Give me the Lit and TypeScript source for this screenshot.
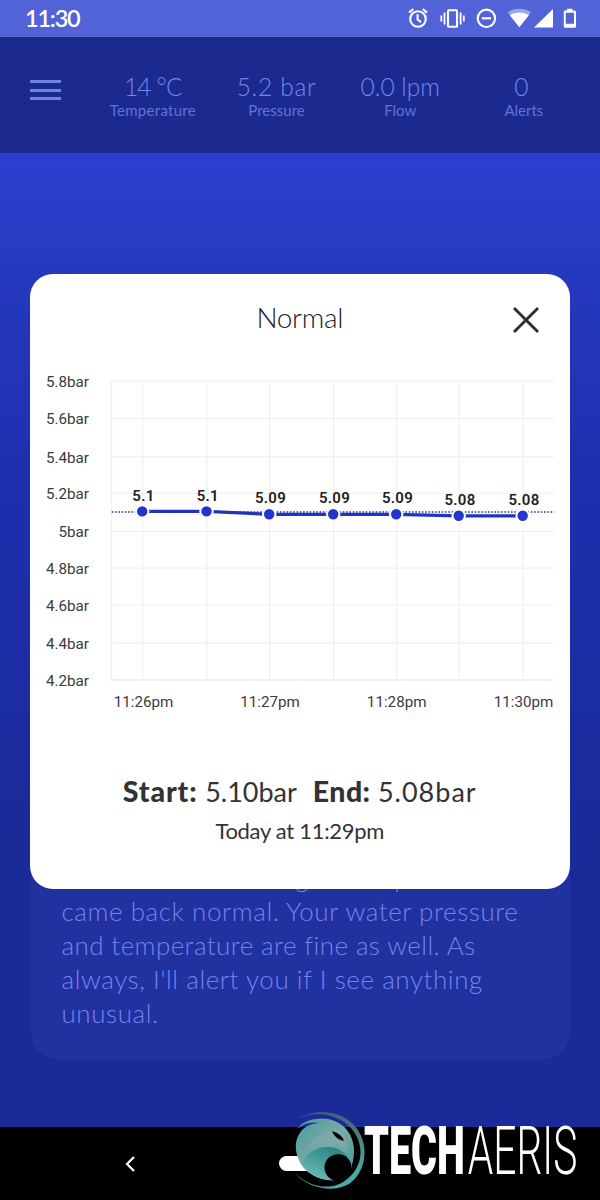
import { LitElement, html, svg, css } from "lit";
import { customElement } from "lit/decorators.js";

const TICKS: [string, number][] = [
  ["5.8bar", 381.3], ["5.6bar", 418.5], ["5.4bar", 456.8], ["5.2bar", 493.3], ["5bar", 531.5],
  ["4.8bar", 568.2], ["4.6bar", 605], ["4.4bar", 643.2], ["4.2bar", 680],
];

const POINTS = [
  { x: 142, y: 511.4, label: "5.1" },
  { x: 206.3, y: 511.4, label: "5.1" },
  { x: 269, y: 514.3, label: "5.09" },
  { x: 333, y: 514.3, label: "5.09" },
  { x: 396, y: 514.3, label: "5.09" },
  { x: 458.5, y: 515.8, label: "5.08" },
  { x: 522.5, y: 515.8, label: "5.08" },
];

const TIMES: [string, number][] = [["11:26pm", 143.3], ["11:27pm", 269.8], ["11:28pm", 396.5], ["11:30pm", 523.3]];

@customElement("pressure-chart")
export class PressureChart extends LitElement {
  static styles = css`
    :host { display: block; }
    svg { display: block; }
    text { font-family: Roboto, sans-serif; font-size: 15.2px; fill: #3c3c3c; }
    .tick { text-anchor: end; }
    .mid { text-anchor: middle; }
    .value { font-size: 15px; text-anchor: middle; font-weight: 600; fill: #222; letter-spacing: 0.3px; }
    .grid { stroke: #f0f0f1; stroke-width: 1.2; }
    .axis { stroke: #e2e2e4; stroke-width: 1.2; }
    .mean { stroke: #26389c; stroke-width: 1.6; stroke-dasharray: 1.6 1.7; }
    .series { stroke: #2234bd; stroke-width: 3.2; fill: none; }
    .dot { fill: #2335cb; stroke: #fff; stroke-width: 2; }
  `;

  render() {
    return html`<svg width="539" height="360" viewBox="29.800 360 539 360">
      ${TICKS.map(([t, y], i) => svg`
        <line class=${i === 8 ? "axis" : "grid"} x1="111" x2="554" y1=${y} y2=${y}></line>
        <text class="tick" x="88.8" y=${y + 5.8}>${t}</text>`)}
      <line class="grid" x1="111.5" x2="111.5" y1="381" y2="680"></line>
      ${POINTS.map((p) => svg`<line class="grid" x1=${p.x + 0.5} x2=${p.x + 0.5} y1="383" y2="679"></line>`)}
      <polyline class="series" points=${POINTS.map((p) => `${p.x},${p.y}`).join(" ")}></polyline>
      <line class="mean" x1="111.5" x2="554" y1="512" y2="512"></line>
      ${POINTS.map((p) => svg`
        <circle class="dot" cx=${p.x} cy=${p.y} r="6.2"></circle>
        <text class="value" x=${p.x + 1.3} y=${p.y - 10.9}>${p.label}</text>`)}
      ${TIMES.map(([t, x]) => svg`<text class="mid" x=${x} y="706.5">${t}</text>`)}
    </svg>`;
  }
}

@customElement("status-icons")
export class StatusIcons extends LitElement {
  static styles = css`
    :host { display: block; }
    svg { display: block; }
  `;

  render() {
    return html`<svg width="180" height="36" viewBox="400 0 180 36" fill="none" stroke="#fff" stroke-width="2.1">
      <circle cx="418" cy="19" r="7.8"></circle>
      <path d="M417.6 14.3v5.2l3.4 2.6M409 12.6l4.3-3.6M427 12.6L422.700 9"></path>
      <rect x="448" y="10.300" width="9" height="16.400" rx="0.8"></rect>
      <path d="M444.500 12.500v12M441.300 15.500v6M460.600 12.500v12M463.800 15.500v6" stroke-width="1.8"></path>
      <circle cx="486.400" cy="18.300" r="8.700"></circle>
      <path d="M481.800 18.300h9.300"></path>
      <g stroke="none">
        <path fill="#9ba4ea" d="M507.600 12.300C514 7.400 524.800 7.400 531 12.300L519.300 27z"></path>
        <path fill="#fff" d="M509.800 15.300C515 11.600 523.700 11.600 528.800 15.300L519.300 27.200z"></path>
        <path fill="#fff" d="M534 27.600L553 9v18.600z"></path>
        <path fill="#fff" fill-rule="evenodd" d="M567 8.800h5.500v1.700h2.200q1.300 0 1.300 1.300v14.500q0 1.500-1.500 1.500h-9.300q-1.400 0-1.400-1.500V11.800q0-1.300 1.300-1.300h1.900zM565.700 12.700v11.100h8.300V12.700z"></path>
      </g>
    </svg>`;
  }
}

@customElement("brand-mark")
export class BrandMark extends LitElement {
  static styles = css`
    :host { display: block; }
    svg { display: block; }
    text { font-family: Roboto, sans-serif; font-size: 66px; fill: #fff; }
    .heavy { font-weight: 900; }
    .thin { font-weight: 300; }
  `;

  render() {
    return html`<svg width="320" height="95" viewBox="280 1105 320 95">
      <defs>
        <linearGradient id="ball" x1="0" y1="0" x2="1" y2="1">
          <stop offset="0" stop-color="#489c9c"></stop>
          <stop offset="0.5" stop-color="#79aaa9"></stop>
          <stop offset="1" stop-color="#3f9a96"></stop>
        </linearGradient>
        <linearGradient id="inner" x1="0.8" y1="0" x2="0.2" y2="1">
          <stop offset="0" stop-color="#207f80"></stop>
          <stop offset="1" stop-color="#70beb8"></stop>
        </linearGradient>
        <linearGradient id="ring" x1="0" y1="0" x2="0.4" y2="1">
          <stop offset="0" stop-color="#38518a"></stop>
          <stop offset="0.5" stop-color="#477777"></stop>
          <stop offset="1" stop-color="#4ba8a3"></stop>
        </linearGradient>
      </defs>
      <path fill="url(#ring)" d="M298.500 1118.500C313 1109 338 1109 353 1124C370 1141 368 1171 349 1184C332 1194 306 1187 295 1173C310 1188 332 1191 346 1180C363 1168 366 1144 350 1127C336 1113 314 1111 298.500 1118.500z"></path>
      <path fill="url(#ball)" d="M297 1129C304 1119 323 1115 337 1122C353 1130 358 1149 351 1168L340 1179C322 1184 303 1172 299 1160C293 1147 296 1136 303 1129Q310 1123 319 1123Q307 1121 297 1129z"></path>
      <path fill="#8aaaaa" d="M305 1151Q318 1140 334 1142L347 1152Q349 1140 340 1131Q329 1128 315 1139z" opacity=".5"></path>
      <path fill="url(#inner)" d="M302 1164C306 1153 316 1147 328 1147C339 1147 349 1154 352 1167L337 1180C321 1182 307 1174 302 1164z"></path>
      <path fill="#000" d="M332 1131Q342 1134 344 1141Q335 1139 332 1131z"></path>
      <circle cx="337.800" cy="1167.500" r="13.300" fill="#000"></circle>
      <path fill="#000" d="M338 1154.200A13.500 13.500 0 0 1 351.500 1167L346 1178L338 1181z"></path>
      <text class="heavy" transform="translate(364 1173.800) scale(.6 1)">TECH</text>
      <text class="thin" transform="translate(467.800 1173.800) scale(.617 1)">AERIS</text>
    </svg>`;
  }
}

@customElement("app-root")
export class AppRoot extends LitElement {
  static styles = css`
    :host { display: block; font-family: Lato, sans-serif; }
    .screen { position: relative; display: flex; flex-direction: column; width: 600px; height: 1200px; overflow: hidden; background: #000; }
    .status { display: flex; justify-content: space-between; box-sizing: border-box; height: 37px; padding: 0 20px 0 25px; background: #5163d6; border-bottom: 1.5px solid #5a6ac8; color: #fff; }
    .clock { font-size: 23.5px; line-height: 37px; font-weight: 600; letter-spacing: -1.2px; }
    .head { display: flex; height: 116px; background: #1c2a90; color: #6b7ce6; box-sizing: border-box; padding-left: 30px; }
    .menu { display: flex; flex-direction: column; gap: 5.5px; width: 31px; padding-top: 43px; margin-right: 30px; }
    .bar { height: 3px; background: #6f80e8; }
    .stat { width: 123.7px; text-align: center; padding-top: 34.500px; }
    .num { font-size: 24.5px; line-height: 29px; font-weight: 300; white-space: nowrap; color: #7585ee; }
    .name { font-size: 15px; line-height: 19px; font-weight: 400; color: #6071dc; }
    .s0 .num { letter-spacing: -0.8px; }
    .s0 .name { letter-spacing: 0.3px; }
    .s1 .num { letter-spacing: 0.7px; }
    .s3 .num { padding-right: 5px; }
    .main { flex: none; box-sizing: border-box; height: 974px; padding: 397px 30.500px 0; background: linear-gradient(180deg, #2b3fd0 0, #2539bf 12%, #1d2fae 35%, #1b2a99 70%, #1b2a98 100%); }
    .panel { box-sizing: border-box; height: 510px; border-radius: 28px; background: #2231a0; padding: 310px 31px 0; color: #7383ee; font-weight: 300; font-size: 26px; line-height: 34px; }
    .line { white-space: nowrap; letter-spacing: 0.56px; }
    .l2 { letter-spacing: 0.4px; }
    .card { position: absolute; left: 30px; top: 274px; width: 539.500px; height: 614.500px; border-radius: 23px; background: #fff; color: #333; display: flex; flex-direction: column; }
    .top { display: flex; justify-content: center; height: 85.500px; position: relative; }
    .title { font-size: 28px; line-height: 34px; font-weight: 300; padding-top: 26px; letter-spacing: -0.3px; color: #222; }
    .close { position: absolute; left: 482px; top: 32px; }
    .range { display: flex; justify-content: center; font-size: 27px; line-height: 34px; margin-top: 54.500px; }
    .b { font-weight: 900; font-size: 28.500px; letter-spacing: 0.9px; margin-right: 7.500px; }
    .end { margin-left: 16px; }
    .end .b { letter-spacing: 0.4px; }
    .wide { letter-spacing: 1px; }
    .when { text-align: center; font-size: 22px; line-height: 28px; margin-top: 8px; letter-spacing: -0.3px; }
    .nav { display: flex; align-items: center; height: 73px; padding-left: 125px; gap: 143px; }
    .pill { width: 44px; height: 15px; border-radius: 8px; background: #fff; }
    .mark { position: absolute; left: 280px; top: 1105px; }
  `;

  stat(num: string, name: string, cls: string) {
    return html`<div class="stat ${cls}"><div class="num">${num}</div><div class="name">${name}</div></div>`;
  }

  render() {
    return html`<div class="screen">
      <div class="status"><div class="clock">11:30</div><status-icons></status-icons></div>
      <div class="head">
        <div class="menu"><div class="bar"></div><div class="bar"></div><div class="bar"></div></div>
        ${this.stat("14 °C", "Temperature", "s0")}${this.stat("5.2 bar", "Pressure", "s1")}${this.stat("0.0 lpm", "Flow", "s2")}${this.stat("0", "Alerts", "s3")}
      </div>
      <div class="main">
        <div class="panel">
          <div class="line">Our local leak testing of the place</div>
          <div class="line">came back normal. Your water pressure</div>
          <div class="line l2">and temperature are fine as well. As</div>
          <div class="line">always, I'll alert you if I see anything</div>
          <div class="line">unusual.</div>
        </div>
      </div>
      <div class="nav">
        <svg width="11" height="16" viewBox="0 0 11 16" fill="none" stroke="#fff" stroke-width="2.200"><path d="M9 1L2 8l7 7"></path></svg>
        <div class="pill"></div>
      </div>
      <div class="card">
        <div class="top">
          <div class="title">Normal</div>
          <svg class="close" width="28" height="28" viewBox="0 0 28 28" stroke="#2d2d2d" stroke-width="2.900"><path d="M2 2L26 26M26 2L2 26"></path></svg>
        </div>
        <pressure-chart></pressure-chart>
        <div class="range">
          <div><span class="b">Start:</span><span>5.10bar</span></div>
          <div class="end"><span class="b">End:</span><span class="wide">5.08bar</span></div>
        </div>
        <div class="when">Today at 11:29pm</div>
      </div>
      <brand-mark class="mark"></brand-mark>
    </div>`;
  }
}
